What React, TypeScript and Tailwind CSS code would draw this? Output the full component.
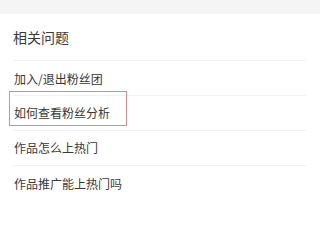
import React from "react";

const items = ["加入/退出粉丝团", "如何查看粉丝分析", "作品怎么上热门", "作品推广能上热门吗"];

export default function App() {
  return (
    <div
      className="w-[320px] h-[240px] bg-white overflow-hidden"
      style={{ fontFamily: '"Noto Sans CJK SC", "Noto Sans", sans-serif' }}
    >
      <div className="h-[14px] bg-[#f5f5f5]" />
      <div className="pl-[13px] pr-[14px]">
        <div className="h-[47px] flex items-center border-b border-[#f2f2f2] text-[14px] text-[#3a3a3a] pt-[1px]">
          相关问题
        </div>
        {items.map((t, i) => (
          <div
            key={t}
            className={`relative h-[35px] flex items-center text-[12px] text-[#383838] ${
              i < items.length - 1 ? "border-b border-[#f2f2f2]" : ""
            } ${i === 0 ? "pt-[2px]" : ""}`}
          >
            <span className="pl-[1px]">{t}</span>
            {i === 1 && (
              <div className="absolute left-[-4px] top-[-5px] w-[118px] h-[35px] border-[1.5px] border-[#dc8a8a] pointer-events-none" />
            )}
          </div>
        ))}
      </div>
    </div>
  );
}
